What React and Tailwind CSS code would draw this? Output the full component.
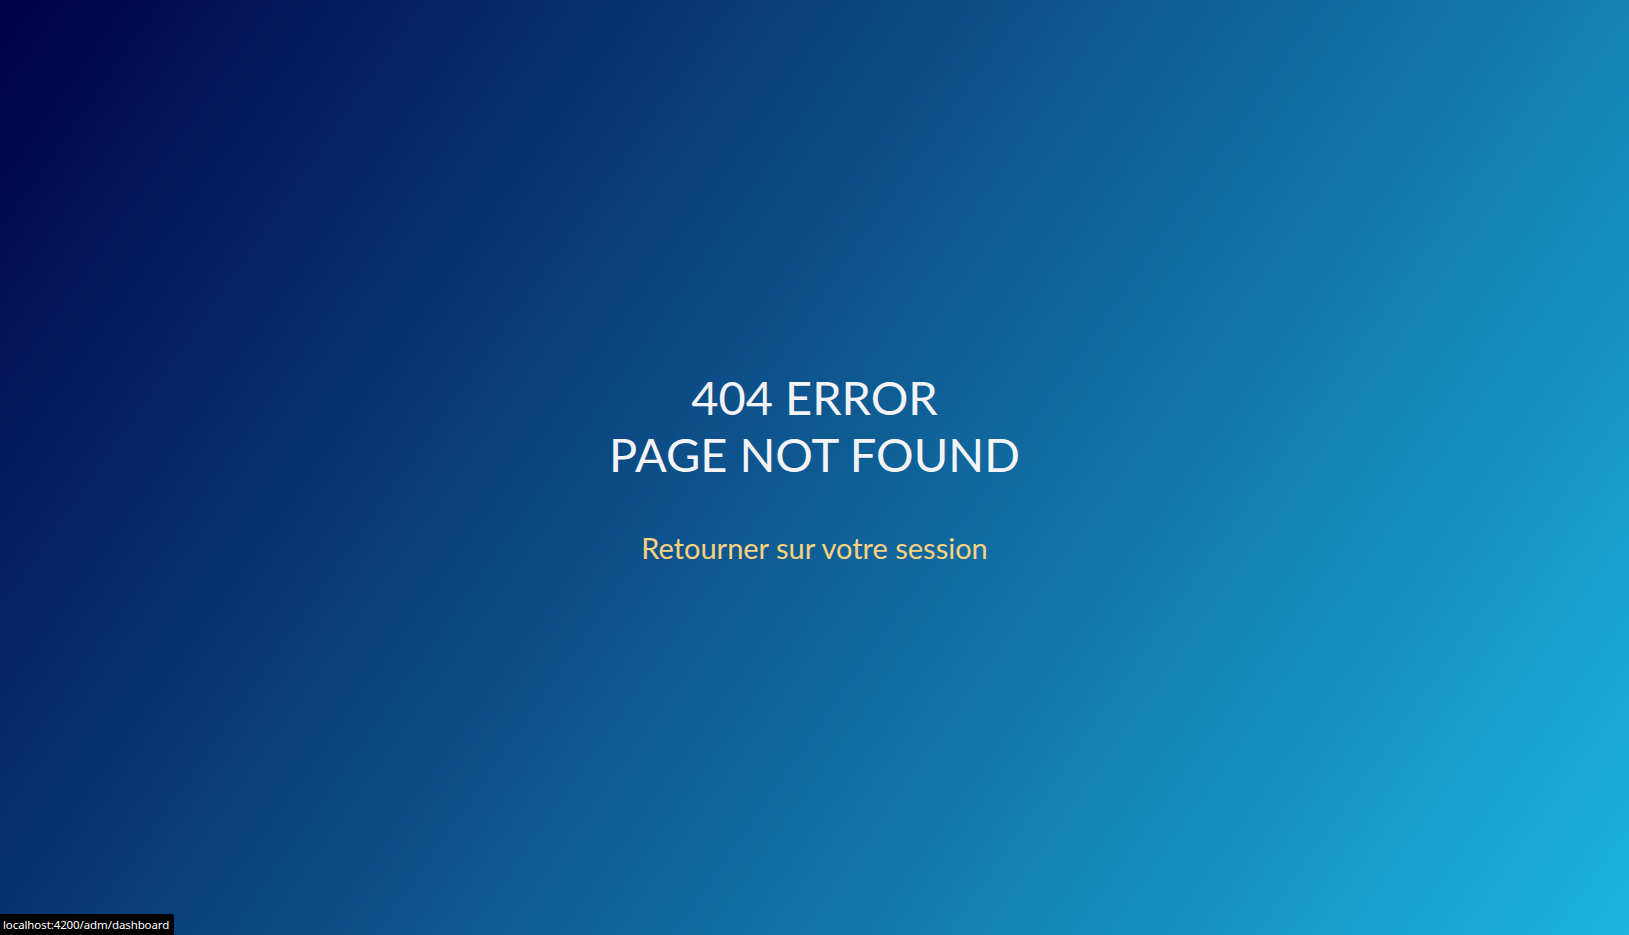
export default function App() {
  return (
    <div className="relative min-h-screen w-full bg-[linear-gradient(125deg,#000046,#1cb5e0)] flex flex-col items-center justify-center font-['Lato',sans-serif] text-center">
      {/* Message principal */}
      <h1 className="text-[47px] leading-[1.21] font-normal text-[#f4f4f6]">
        404 ERROR
        <br />
        PAGE NOT FOUND
      </h1>

      <a href="#" className="mt-[48px] text-[29px] leading-[1.2] text-[#fcd27f]">
        Retourner sur votre session
      </a>

      {/* Barre de statut du navigateur */}
      <div className="absolute left-0 bottom-0 h-[21px] w-[174px] px-[3px] bg-black rounded-tr-[3px] flex items-center text-[11.5px] tracking-[-0.1px] text-white font-['Noto_Sans',sans-serif]">
        localhost:4200/adm/dashboard
      </div>
    </div>
  );
}
